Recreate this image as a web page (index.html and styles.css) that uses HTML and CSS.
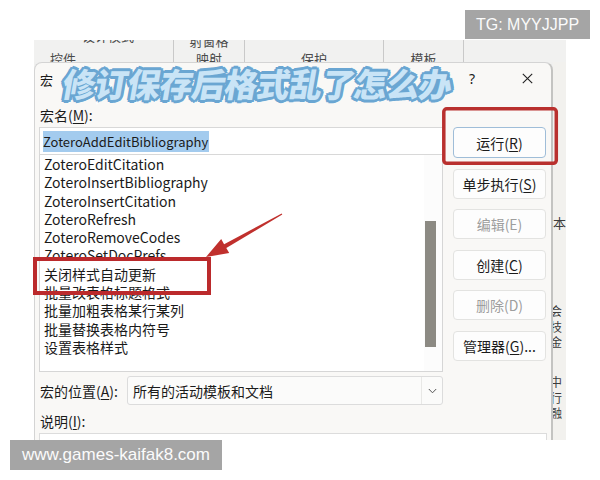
FILE: index.html
```html
<!DOCTYPE html>
<html lang="zh-CN">
<head>
<meta charset="utf-8">
<title>宏</title>
<link rel="stylesheet" href="styles.css">
</head>
<body>
<div class="photo">
  <div class="ribbon">
    <div class="grp g1"><span class="r1 r1-left">设计模式</span><span class="r2 r2-left">控件</span></div>
    <div class="grp g2"><span class="r1">射窗格</span><span class="r2">映射</span></div>
    <div class="grp g3"><span class="r1">&nbsp;</span><span class="r2">保护</span></div>
    <div class="grp g4"><span class="r1">&nbsp;</span><span class="r2">模板</span></div>
    <div class="grp g5"></div>
  </div>
  <div class="stage">
    <div class="dialog">
      <div class="titlebar">
        <span class="title">宏</span>
        <span class="help">?</span>
        <span class="close"><svg width="11" height="11" viewBox="0 0 11 11"><path d="M0.8 0.8 L10.2 10.2 M10.2 0.8 L0.8 10.2" stroke="#222" stroke-width="1.1" fill="none"/></svg></span>
      </div>
      <div class="body">
        <div class="left">
          <div class="label">宏名(<u>M</u>):</div>
          <div class="namebox"><span class="sel">ZoteroAddEditBibliography</span></div>
          <div class="list">
            <div class="items">
              <div class="item lat">ZoteroEditCitation</div>
              <div class="item lat">ZoteroInsertBibliography</div>
              <div class="item lat">ZoteroInsertCitation</div>
              <div class="item lat">ZoteroRefresh</div>
              <div class="item lat">ZoteroRemoveCodes</div>
              <div class="item lat">ZoteroSetDocPrefs</div>
              <div class="item">关闭样式自动更新</div>
              <div class="item">批量改表格标题格式</div>
              <div class="item">批量加粗表格某行某列</div>
              <div class="item">批量替换表格内符号</div>
              <div class="item">设置表格样式</div>
            </div>
            <div class="track"><div class="thumb"></div></div>
          </div>
          <div class="combo-row">
            <span class="combo-label">宏的位置(<u>A</u>):</span>
            <div class="combo">
              <span class="combo-text">所有的活动模板和文档</span>
              <span class="chev"><svg width="9" height="6" viewBox="0 0 9 6"><path d="M0.8 1 L4.5 4.8 L8.2 1" stroke="#555" stroke-width="1" fill="none"/></svg></span>
            </div>
          </div>
        </div>
        <div class="buttons">
          <div class="btn default">运行(<u>R</u>)</div>
          <div class="btn">单步执行(<u>S</u>)</div>
          <div class="btn disabled">编辑(E)</div>
          <div class="btn">创建(<u>C</u>)</div>
          <div class="btn disabled">删除(D)</div>
          <div class="btn">管理器(<u>G</u>)...</div>
        </div>
      </div>
      <div class="desc-label">说明(<u>I</u>):</div>
      <div class="desc"></div>
    </div>
    <div class="doc">
      <div class="dl d1">本</div>
      <div class="dl d2 cut">会</div>
      <div class="dl cut">技</div>
      <div class="dl cut">金</div>
      <div class="dl d3 cut">中</div>
      <div class="dl cut">行</div>
      <div class="dl cut">融</div>
    </div>
  </div>
</div>

<div class="headline">修订保存后格式乱了怎么办</div>

<svg class="marks" width="600" height="480" viewBox="0 0 600 480">
  <rect x="35" y="259" width="174" height="34" fill="none" stroke="#bb2a2c" stroke-width="4"/>
  <rect x="443.8" y="108.8" width="112.5" height="54.5" rx="3" fill="none" stroke="#b9302e" stroke-width="3.5"/>
  <polygon points="282.3,214.5 226.3,248.0 229.2,253.1 206,257 221.2,239.1 224.1,244.2 281.7,213.5" fill="#c0302d"/>
</svg>

<div class="wm wm-tg">TG: MYYJJPP</div>
<div class="wm wm-url">www.games-kaifak8.com</div>
</body>
</html>
```

FILE: styles.css
```css
* { box-sizing: border-box; margin: 0; padding: 0; }
html, body { width: 600px; height: 480px; background: #fff; overflow: hidden; }
body {
  position: relative;
  font-family: "Noto Sans CJK SC", "Noto Sans", sans-serif;
  color: #1b1b1b;
}
u { text-decoration: underline; text-underline-offset: 2px; text-decoration-thickness: 1px; }

.photo {
  margin: 40px 0 0 34px;
  width: 532px;
  height: 400px;
  overflow: hidden;
  display: flex;
  flex-direction: column;
  background: #f0f0ef;
}

/* ribbon behind the dialog */
.ribbon {
  flex: none;
  height: 22px;
  display: flex;
  background: #f1f1f0;
  overflow: hidden;
}
.grp {
  height: 22px;
  overflow: hidden;
  border-right: 1px solid #c9c9c9;
  font-size: 13px;
  color: #4a4a4a;
  text-align: center;
}
.g1 { width: 140px; text-align: left; }
.g2 { width: 71px; }
.g3 { width: 139px; }
.g4 { width: 80px; }
.g5 { flex: 1; border-right: none; }
.r1 { display: block; height: 16px; line-height: 16px; margin-top: -7px; }
.r2 { display: block; height: 16px; line-height: 16px; margin-top: 2px; }
.r1-left { padding-left: 48px; margin-top: -12px; }
.r2-left { padding-left: 16px; margin-top: 7px; }

.stage {
  flex: 1;
  display: flex;
  min-height: 0;
}

.dialog {
  width: 519px;
  flex: none;
  background: #f9f8f6;
  border-left: 1px solid #d4d4d4;
  border-top: 1px solid #d4d4d4;
  border-right: 2px solid #c3c3c1;
  border-radius: 8px 8px 0 0;
}

.titlebar {
  height: 31px;
  display: flex;
  align-items: center;
  padding-left: 5px;
  padding-right: 9px;
}
.title { font-size: 13px; margin-top: 2px; }
.help {
  margin-left: auto;
  width: 30px;
  text-align: center;
  font-size: 14px;
  font-family: "Noto Sans", sans-serif;
}
.close {
  width: 30px;
  margin-left: 25px;
  display: flex;
  justify-content: center;
  align-items: center;
}

.body {
  display: flex;
  padding: 10px 5px 0 4px;
}
.left { width: 404px; flex: none; }
.label { height: 23px; line-height: 23px; font-size: 14px; padding-left: 1px; }

.namebox {
  height: 28px;
  background: #fff;
  border: 1px solid #d8d8d8;
  display: flex;
  align-items: center;
  padding-left: 3px;
}
.sel {
  background: #a3cbee;
  font-size: 13px;
  line-height: 21px;
  padding-right: 1px;
}

.list {
  height: 217px;
  background: #fff;
  border: 1px solid #d6d6d6;
  border-top: none;
  display: flex;
  overflow: hidden;
}
.items { flex: 1; padding-left: 4px; }
.item { height: 18.3px; line-height: 18.3px; font-size: 14px; white-space: nowrap; color: #1a1a1a; }
.item.lat { font-size: 14px; }
.track { width: 18px; padding: 66px 0 0 1px; background: #fcfcfc; }
.thumb { width: 11px; height: 126px; background: #8c8a83; }

.combo-row {
  margin-top: 4px;
  height: 29px;
  display: flex;
  align-items: center;
}
.combo-label { width: 88px; flex: none; font-size: 14px; padding-left: 1px; }
.combo {
  flex: 1;
  height: 29px;
  display: flex;
  align-items: center;
  background: #fbfbfa;
  border: 1px solid #dcdcdc;
  border-radius: 3px;
}
.combo-text { flex: 1; font-size: 14px; padding-left: 5px; }
.chev {
  width: 21px;
  height: 27px;
  border-left: 1px solid #e8e8e6;
  display: flex;
  align-items: center;
  justify-content: center;
}

.buttons {
  width: 93px;
  margin-left: 10px;
  padding-top: 23px;
}
.btn {
  height: 30px;
  margin-top: 10.6px;
  background: #fdfdfd;
  border: 1px solid #e3e3e1;
  border-radius: 4px;
  display: flex;
  align-items: center;
  justify-content: center;
  font-size: 14px;
  color: #1b1b1b;
}
.btn.default { margin-top: 0; height: 31px; border-color: #9fbdd8; }
.btn.disabled { color: #9e9e9e; }

.desc-label {
  margin: 6px 0 0 5px;
  height: 20px;
  line-height: 20px;
  font-size: 14px;
}
.desc {
  margin: 2px 0 0 4px;
  width: 508px;
  height: 40px;
  background: #fff;
  border: 1px solid #dcdcdc;
}

.doc {
  flex: 1;
  background: #f2f1ee;
  overflow: hidden;
  font-size: 12px;
  color: #3c3c3c;
}
.dl { height: 15.5px; line-height: 15.5px; white-space: nowrap; }
.dl.cut { margin-left: -3px; }
.d1 { margin-top: 153px; font-size: 13px; }
.d2 { margin-top: 72.5px; }
.d3 { margin-top: 24.5px; }

/* overlays */
.headline {
  position: absolute;
  left: 60px;
  top: 65px;
  font-size: 33px;
  line-height: 36px;
  letter-spacing: -0.6px;
  font-weight: 900;
  color: #c9e4f6;
  -webkit-text-stroke: 5px #ffffff;
  paint-order: stroke fill;
  text-shadow:
    3px 0 0 #6aa6d2, -3px 0 0 #6aa6d2, 0 3px 0 #6aa6d2, 0 -3px 0 #6aa6d2,
    2.2px 2.2px 0 #6aa6d2, -2.2px 2.2px 0 #6aa6d2, 2.2px -2.2px 0 #6aa6d2, -2.2px -2.2px 0 #6aa6d2;
  transform: skewX(-10deg);
  transform-origin: left bottom;
  white-space: nowrap;
}

.marks { position: absolute; left: 0; top: 0; pointer-events: none; }

.wm {
  position: absolute;
  background: #a5a5a5;
  color: #fbfbfb;
  font-family: "Liberation Sans", Arial, sans-serif;
  white-space: nowrap;
}
.wm-tg {
  left: 465px;
  top: 10px;
  width: 125px;
  height: 29px;
  line-height: 29px;
  font-size: 16px;
  text-align: center;
}
.wm-url {
  left: 10px;
  top: 440px;
  width: 212px;
  height: 30px;
  line-height: 30px;
  font-size: 17px;
  text-align: center;
}
```
